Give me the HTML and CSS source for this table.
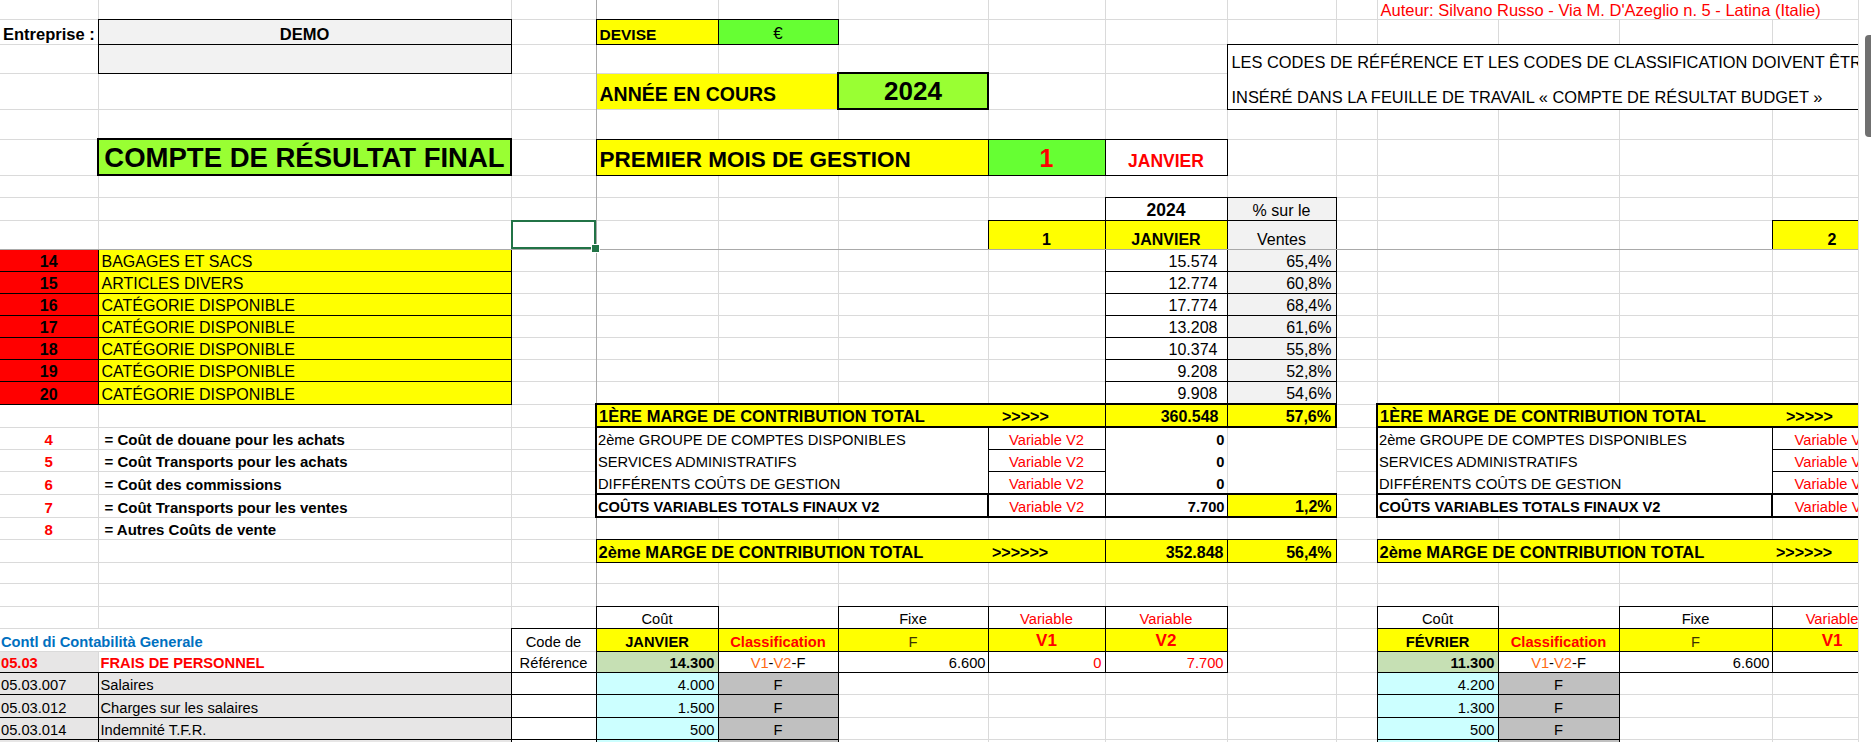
FILE: index.html
```html
<!DOCTYPE html>
<html lang="fr">
<head>
<meta charset="utf-8">
<title>Compte de résultat final</title>
<link rel="stylesheet" href="styles.css">
</head>
<body>
<div class="sheet">
<table class="grid">
<colgroup>
<col class="cA"><col class="cB"><col class="cC"><col class="cD"><col class="cE"><col class="cF"><col class="cG"><col class="cH"><col class="cI"><col class="cJ"><col class="cK"><col class="cL"><col class="cM"><col class="cN"><col class="cO">
</colgroup>
<tbody>
<tr class="h19">
<td></td><td></td><td></td><td></td><td></td><td></td><td></td><td></td><td></td><td></td>
<td colspan="4" class="author red">Auteur: Silvano Russo - Via M. D'Azeglio n. 5 - Latina (Italie)</td>
<td></td>
</tr>
<tr class="h25">
<td class="r b f165">Entreprise :</td>
<td class="gr ba b c f165">DEMO</td>
<td></td>
<td class="y ba b f155">DEVISE</td>
<td class="g1 ba c f17">€</td>
<td></td><td></td><td></td><td></td><td></td><td></td><td></td><td></td><td></td><td></td>
</tr>
<tr class="h29">
<td></td>
<td class="gr ba"></td>
<td></td><td></td><td></td><td></td><td></td><td></td>
<td colspan="7" class="bt bl nob f164 pl4 pb2">LES CODES DE RÉFÉRENCE ET LES CODES DE CLASSIFICATION DOIVENT ÊTRE</td>
</tr>
<tr class="h36">
<td></td><td></td><td></td>
<td colspan="2" class="y b f195 pb4">ANNÉE EN COURS</td>
<td class="g2 Ba b c f26 pb2">2024</td>
<td></td><td></td>
<td colspan="7" class="bb bl not f164 pl4 pb3">INSÉRÉ DANS LA FEUILLE DE TRAVAIL « COMPTE DE RÉSULTAT BUDGET »</td>
</tr>
<tr class="h30">
<td></td><td></td><td></td><td></td><td></td><td></td><td></td><td></td><td></td><td></td><td></td><td></td><td></td><td></td><td></td>
</tr>
<tr class="h36">
<td></td>
<td class="g2 Ba b c f275">COMPTE DE RÉSULTAT FINAL</td>
<td></td>
<td colspan="3" class="y ba b f225 pb3">PREMIER MOIS DE GESTION</td>
<td class="g1 ba b c red f25 pb3">1</td>
<td class="ba b c red f175 pb4">JANVIER</td>
<td></td><td></td><td></td><td></td><td></td><td></td><td></td>
</tr>
<tr class="h22">
<td></td><td></td><td></td><td></td><td></td><td></td><td></td><td></td><td></td><td></td><td></td><td></td><td></td><td></td><td></td>
</tr>
<tr class="h23">
<td></td><td></td><td></td><td></td><td></td><td></td><td></td>
<td class="bt bl br b c f175 pb0">2024</td>
<td class="gr bt br c f16">% sur le</td>
<td></td><td></td><td></td><td></td><td></td><td></td>
</tr>
<tr class="h29 fz">
<td></td><td></td><td class="sel"></td><td></td><td></td><td></td>
<td class="y ba b c f16">1</td>
<td class="y ba b c f16">JANVIER</td>
<td class="gr ba c f16">Ventes</td>
<td></td><td></td><td></td><td></td>
<td class="y ba b c f16">2</td>
<td></td>
</tr>
<tr class="h22">
<td class="rd ba b c f16">14</td><td class="y ba f16">BAGAGES ET SACS</td>
<td></td><td></td><td></td><td></td><td></td>
<td class="ba r f16 pr9">15.574</td><td class="gr ba r f16 pr4">65,4%</td>
<td></td><td></td><td></td><td></td><td></td><td></td>
</tr>
<tr class="h22">
<td class="rd ba b c f16">15</td><td class="y ba f16">ARTICLES DIVERS</td>
<td></td><td></td><td></td><td></td><td></td>
<td class="ba r f16 pr9">12.774</td><td class="gr ba r f16 pr4">60,8%</td>
<td></td><td></td><td></td><td></td><td></td><td></td>
</tr>
<tr class="h22">
<td class="rd ba b c f16">16</td><td class="y ba f16">CATÉGORIE DISPONIBLE</td>
<td></td><td></td><td></td><td></td><td></td>
<td class="ba r f16 pr9">17.774</td><td class="gr ba r f16 pr4">68,4%</td>
<td></td><td></td><td></td><td></td><td></td><td></td>
</tr>
<tr class="h22">
<td class="rd ba b c f16">17</td><td class="y ba f16">CATÉGORIE DISPONIBLE</td>
<td></td><td></td><td></td><td></td><td></td>
<td class="ba r f16 pr9">13.208</td><td class="gr ba r f16 pr4">61,6%</td>
<td></td><td></td><td></td><td></td><td></td><td></td>
</tr>
<tr class="h22">
<td class="rd ba b c f16">18</td><td class="y ba f16">CATÉGORIE DISPONIBLE</td>
<td></td><td></td><td></td><td></td><td></td>
<td class="ba r f16 pr9">10.374</td><td class="gr ba r f16 pr4">55,8%</td>
<td></td><td></td><td></td><td></td><td></td><td></td>
</tr>
<tr class="h22">
<td class="rd ba b c f16">19</td><td class="y ba f16">CATÉGORIE DISPONIBLE</td>
<td></td><td></td><td></td><td></td><td></td>
<td class="ba r f16 pr9">9.208</td><td class="gr ba r f16 pr4">52,8%</td>
<td></td><td></td><td></td><td></td><td></td><td></td>
</tr>
<tr class="h23">
<td class="rd ba b c f16">20</td><td class="y ba f16">CATÉGORIE DISPONIBLE</td>
<td></td><td></td><td></td><td></td><td></td>
<td class="ba r f16 pr9">9.908</td><td class="gr ba r f16 pr4">54,6%</td>
<td></td><td></td><td></td><td></td><td></td><td></td>
</tr>
<tr class="h23">
<td></td><td></td><td></td>
<td colspan="3" class="y Bt Bb Bl nor b f165 pl2">1ÈRE MARGE DE CONTRIBUTION TOTAL</td>
<td class="y Bt Bb b f16 pl14">&gt;&gt;&gt;&gt;&gt;</td>
<td class="y Bt Bb bl br b r f16 pr8">360.548</td>
<td class="y Bt Bb Br b r f16 pr4">57,6%</td>
<td></td>
<td colspan="3" class="y Bt Bb Bl nor b f165 pl2">1ÈRE MARGE DE CONTRIBUTION TOTAL</td>
<td class="y Bt Bb b f16 pl14 nor">&gt;&gt;&gt;&gt;&gt;</td>
<td class="y Bt Bb"></td>
</tr>
<tr class="h22">
<td class="red b c f15">4</td>
<td class="b f15 pl6">= Coût de douane pour les achats</td>
<td></td>
<td colspan="3" class="Bl nob pl1">2ème GROUPE DE COMPTES DISPONIBLES</td>
<td class="ba red c">Variable V2</td>
<td class="nob b r pr2">0</td>
<td class="nob"></td>
<td></td>
<td colspan="3" class="Bl nob pl1">2ème GROUPE DE COMPTES DISPONIBLES</td>
<td class="ba red c">Variable V2</td>
<td></td>
</tr>
<tr class="h22">
<td class="red b c f15">5</td>
<td class="b f15 pl6">= Coût Transports pour les achats</td>
<td></td>
<td colspan="3" class="Bl nob pl1">SERVICES ADMINISTRATIFS</td>
<td class="ba red c">Variable V2</td>
<td class="nob b r pr2">0</td>
<td class="nob"></td>
<td></td>
<td colspan="3" class="Bl nob pl1">SERVICES ADMINISTRATIFS</td>
<td class="ba red c">Variable V2</td>
<td></td>
</tr>
<tr class="h23">
<td class="red b c f15">6</td>
<td class="b f15 pl6">= Coût des commissions</td>
<td></td>
<td colspan="3" class="Bl pl1">DIFFÉRENTS COÛTS DE GESTION</td>
<td class="ba red c">Variable V2</td>
<td class="b r pr2">0</td>
<td></td>
<td></td>
<td colspan="3" class="Bl pl1">DIFFÉRENTS COÛTS DE GESTION</td>
<td class="ba red c">Variable V2</td>
<td></td>
</tr>
<tr class="h23">
<td class="red b c f15">7</td>
<td class="b f15 pl6">= Coût Transports pour les ventes</td>
<td></td>
<td colspan="3" class="Ba b pl1">COÛTS VARIABLES TOTALS FINAUX V2</td>
<td class="Bt Bb br red c">Variable V2</td>
<td class="Bt Bb br b r pr2">7.700</td>
<td class="y Bt Bb br b r f16 pr4">1,2%</td>
<td></td>
<td colspan="3" class="Ba b pl1">COÛTS VARIABLES TOTALS FINAUX V2</td>
<td class="Bt Bb red c">Variable V2</td>
<td class="Bt Bb"></td>
</tr>
<tr class="h22">
<td class="red b c f15">8</td>
<td class="b f15 pl6">= Autres Coûts de vente</td>
<td></td><td></td><td></td><td></td><td></td><td></td><td></td><td></td><td></td><td></td><td></td><td></td><td></td>
</tr>
<tr class="h23">
<td></td><td></td><td></td>
<td colspan="3" class="y bt bb bl nor b f165 pl2">2ème MARGE DE CONTRIBUTION TOTAL</td>
<td class="y bt bb b f16 pl4">&gt;&gt;&gt;&gt;&gt;&gt;</td>
<td class="y ba b r f16 pr3">352.848</td>
<td class="y ba b r f16 pr4">56,4%</td>
<td></td>
<td colspan="3" class="y bt bb bl nor b f165 pl2">2ème MARGE DE CONTRIBUTION TOTAL</td>
<td class="y bt bb b f16 pl4 nor">&gt;&gt;&gt;&gt;&gt;&gt;</td>
<td class="y bt bb"></td>
</tr>
<tr class="h21">
<td></td><td></td><td></td><td></td><td></td><td></td><td></td><td></td><td></td><td></td><td></td><td></td><td></td><td></td><td></td>
</tr>
<tr class="h23">
<td></td><td></td><td></td><td></td><td></td><td></td><td></td><td></td><td></td><td></td><td></td><td></td><td></td><td></td><td></td>
</tr>
<tr class="h22">
<td></td><td></td><td></td>
<td class="bt bl br c">Coût</td>
<td></td>
<td class="bt bl br c">Fixe</td>
<td class="bt br red c">Variable</td>
<td class="bt br red c">Variable</td>
<td></td><td></td>
<td class="bt bl br c">Coût</td>
<td></td>
<td class="bt bl br c">Fixe</td>
<td class="bt br red c">Variable</td>
<td></td>
</tr>
<tr class="h23">
<td colspan="2" class="blue b pl1">Contl di Contabilità Generale</td>
<td class="bt bl br c">Code de</td>
<td class="y ba b c">JANVIER</td>
<td class="y ba b c red">Classification</td>
<td class="y ba c olive">F</td>
<td class="y ba b c red f17">V1</td>
<td class="y ba b c red f17">V2</td>
<td></td><td></td>
<td class="y ba b c">FÉVRIER</td>
<td class="y ba b c red">Classification</td>
<td class="y ba c olive">F</td>
<td class="y ba b c red f17">V1</td>
<td class="y ba"></td>
</tr>
<tr class="h21">
<td class="lg bb b red pl1">05.03</td>
<td class="bb b red pl2">FRAIS DE PERSONNEL</td>
<td class="bl br bb c">Référence</td>
<td class="lgr ba b r pr3">14.300</td>
<td class="ba c"><span class="org">V1</span>-<span class="org">V2</span>-F</td>
<td class="ba r pr2">6.600</td>
<td class="ba r red pr3">0</td>
<td class="ba r red pr3">7.700</td>
<td></td><td></td>
<td class="lgr ba b r pr3">11.300</td>
<td class="ba c"><span class="org">V1</span>-<span class="org">V2</span>-F</td>
<td class="ba r pr2">6.600</td>
<td class="ba"></td>
<td></td>
</tr>
<tr class="h22">
<td class="lg ba pl1">05.03.007</td>
<td class="lg ba pl2">Salaires</td>
<td class="ba"></td>
<td class="cy ba r pr3">4.000</td>
<td class="sv ba c">F</td>
<td></td><td></td><td></td><td></td><td></td>
<td class="cy ba r pr3">4.200</td>
<td class="sv ba c">F</td>
<td></td><td></td><td></td>
</tr>
<tr class="h23">
<td class="lg ba pl1">05.03.012</td>
<td class="lg ba pl2">Charges sur les salaires</td>
<td class="ba"></td>
<td class="cy ba r pr3">1.500</td>
<td class="sv ba c">F</td>
<td></td><td></td><td></td><td></td><td></td>
<td class="cy ba r pr3">1.300</td>
<td class="sv ba c">F</td>
<td></td><td></td><td></td>
</tr>
<tr class="h22">
<td class="lg ba pl1">05.03.014</td>
<td class="lg ba pl2">Indemnité T.F.R.</td>
<td class="ba"></td>
<td class="cy ba r pr3">500</td>
<td class="sv ba c">F</td>
<td></td><td></td><td></td><td></td><td></td>
<td class="cy ba r pr3">500</td>
<td class="sv ba c">F</td>
<td></td><td></td><td></td>
</tr>
<tr class="h22">
<td class="lg ba"></td>
<td class="lg ba"></td>
<td class="ba"></td>
<td class="cy ba"></td>
<td class="sv ba"></td>
<td></td><td></td><td></td><td></td><td></td>
<td class="cy ba"></td>
<td class="sv ba"></td>
<td></td><td></td><td></td>
</tr>
</tbody>
</table>
</div>
<div class="vscroll"><div class="thumb"></div></div>
</body>
</html>
```

FILE: styles.css
```css
* { box-sizing: border-box; }
html, body { margin: 0; padding: 0; background: #fff; }
body {
  width: 1871px;
  height: 742px;
  overflow: hidden;
  display: flex;
  font-family: "Liberation Sans", Arial, Helvetica, sans-serif;
  color: #000;
}
.sheet { flex: none; width: 1858px; height: 742px; overflow: hidden; }
.vscroll {
  flex: none;
  width: 13px;
  height: 742px;
  background: #fff;
  border-left: 1px solid #dcdcdc;
  display: flex;
  flex-direction: column;
  align-items: flex-end;
  padding-top: 35px;
}
.thumb { width: 6px; height: 102px; background: #707070; border-radius: 4px 0 0 4px; }

/* grid */
.grid { border-collapse: collapse; table-layout: fixed; width: 1992px; }
.cA { width: 98px; } .cB { width: 413px; } .cC { width: 85px; } .cD { width: 122px; }
.cE { width: 120px; } .cF { width: 150px; } .cG { width: 117px; } .cH { width: 122px; }
.cI { width: 109px; } .cJ { width: 41px; } .cK { width: 121px; } .cL { width: 121px; }
.cM { width: 153px; } .cN { width: 120px; } .cO { width: 100px; }
.grid col.cC { border-right: 1px double #a9a9a9; }

.grid td {
  border: 1px solid #dadada;
  padding: 0 3px 1px;
  vertical-align: bottom;
  white-space: nowrap;
  overflow: hidden;
  font-size: 14.7px;
  line-height: 16px;
}
.grid tr:first-child td { border-top: none; }
.grid td:first-child { border-left: none; }

.h19 { height: 19px; } .h21 { height: 21px; } .h22 { height: 22px; } .h23 { height: 23px; }
.h25 { height: 25px; } .h29 { height: 29px; } .h30 { height: 30px; } .h36 { height: 36px; }

/* fills */
.grid .y { background: #ffff00; }
.grid .rd { background: #ff0000; }
.grid .g1 { background: #66ff33; }
.grid .g2 { background: #99ff33; }
.grid .gr { background: #f2f2f2; }
.grid .lg { background: #e7e6e6; }
.grid .cy { background: #ccffff; }
.grid .sv { background: #c0c0c0; }
.grid .lgr { background: #c6e0b4; }

/* borders */
.grid .ba { border: 1px double #000; }
.grid .bt { border-top: 1px double #000; }
.grid .bb { border-bottom: 1px double #000; }
.grid .bl { border-left: 1px double #000; }
.grid .br { border-right: 1px double #000; }
.grid .Ba { border: 2px solid #000; }
.grid .Bt { border-top: 2px solid #000; }
.grid .Bb { border-bottom: 2px solid #000; }
.grid .Bl { border-left: 2px solid #000; }
.grid .Br { border-right: 2px solid #000; }
.grid .nob { border-bottom-style: hidden; }
.grid .not { border-top-style: hidden; }
.grid .nor { border-right-style: hidden; }
.grid .fz > td { border-bottom: 1px double #a9a9a9; }

/* text */
.grid .b { font-weight: bold; }
.grid .c { text-align: center; }
.grid .r { text-align: right; }
.grid .red { color: #ff0000; }
.grid .blue { color: #0070c0; }
.grid .olive { color: #3d3300; }
.org { color: #ff6a13; }

.grid .f15 { font-size: 15px; line-height: 16px; }
.grid .f155 { font-size: 15.5px; line-height: 17px; }
.grid .f16 { font-size: 16px; line-height: 17px; }
.grid .f164 { font-size: 16.4px; line-height: 18px; }
.grid .f165 { font-size: 16.5px; line-height: 18px; }
.grid .f17 { font-size: 17px; line-height: 18px; }
.grid .f175 { font-size: 17.5px; line-height: 19px; }
.grid .f195 { font-size: 19.5px; line-height: 21px; }
.grid .f225 { font-size: 22.5px; line-height: 25px; }
.grid .f25 { font-size: 25px; line-height: 27px; }
.grid .f26 { font-size: 26px; line-height: 29px; }
.grid .f275 { font-size: 27.5px; line-height: 30px; }
.grid .author { font-size: 16.5px; line-height: 16px; padding: 0 3px 1px; }

.grid .pl1 { padding-left: 1px; }
.grid .pl2 { padding-left: 2px; }
.grid .pl4 { padding-left: 4px; }
.grid .pl6 { padding-left: 6px; }
.grid .pl14 { padding-left: 14px; }
.grid .pr2 { padding-right: 2px; }
.grid .pr3 { padding-right: 3px; }
.grid .pr4 { padding-right: 4px; }
.grid .pr8 { padding-right: 8px; }
.grid .pr9 { padding-right: 9px; }
.grid .pb0 { padding-bottom: 0; }
.grid .pb2 { padding-bottom: 2px; }
.grid .pb3 { padding-bottom: 3px; }
.grid .pb4 { padding-bottom: 4px; }

/* selected cell */
.grid .sel { outline: 2px solid #217346; outline-offset: -2px; position: relative; overflow: visible; }
.grid .sel::after {
  content: "";
  position: absolute;
  right: -4px;
  bottom: -4px;
  width: 7px;
  height: 7px;
  background: #217346;
  border: 1px solid #fff;
}
```
